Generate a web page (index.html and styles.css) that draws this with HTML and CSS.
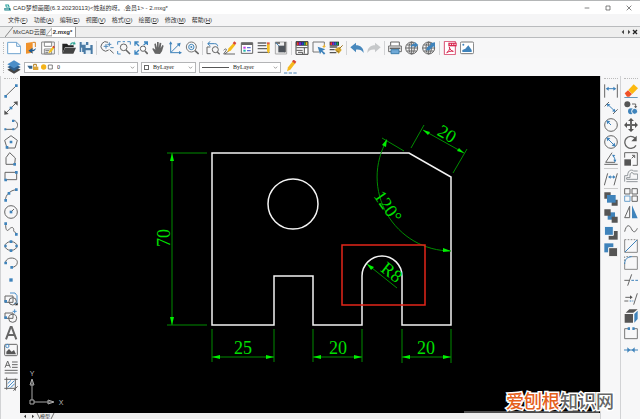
FILE: index.html
```html
<!DOCTYPE html>
<html lang="zh-CN">
<head>
    <meta charset="UTF-8">
    <meta name="viewport" content="width=device-width, initial-scale=1.0">
    <title>CAD梦想画图</title>
    <link rel="stylesheet" href="styles.css">
</head>
<body>

<header class="titlebar">
    <svg class="logo" viewBox="0 0 18 18"><path d="M3 1h9l3 8H5z" fill="#1c9a96"/><path d="M6 3h4l2 5H7z" fill="#bfe8e4"/><path d="M1 10h15l2 7H1z" fill="#147f86"/><path d="M3 13h10" stroke="#fff" stroke-width="2"/></svg>
    <h1>CAD梦想画图(6.3.20230113)&lt;姓赵的呀。,会员1&gt; - 2.mxg*</h1>
    <div class="window-buttons">
        <button aria-label="最小化"><svg viewBox="0 0 18 18"><path d="M2 9h14"/></svg></button>
        <button aria-label="最大化"><svg viewBox="0 0 18 18"><path d="M3 3h12v12H3z"/></svg></button>
        <button aria-label="关闭"><svg viewBox="0 0 18 18"><path d="M2 2l14 14M16 2L2 16"/></svg></button>
    </div>
</header>

<nav class="menu">
    <button>文件(<u>F</u>)</button>
    <button>功能(<u>A</u>)</button>
    <button>编辑(<u>E</u>)</button>
    <button>视图(<u>V</u>)</button>
    <button>格式(<u>O</u>)</button>
    <button>绘图(<u>D</u>)</button>
    <button>修改(<u>M</u>)</button>
    <button>帮助(<u>H</u>)</button>
</nav>

<div class="tabs">
    <svg class="slant" viewBox="0 0 8 10"><path d="M0 10L8 0"/></svg>
    <button class="tab">MxCAD云图</button>
    <svg class="slant active" viewBox="0 0 8 10"><path d="M0 10L8 0V10z"/></svg>
    <button class="tab active">2.mxg*</button>
    <div class="tab-nav">
        <button aria-label="上一个"><svg viewBox="0 0 18 18"><path d="M12 2v14L5 9z"/></svg></button>
        <button aria-label="下一个"><svg viewBox="0 0 18 18"><path d="M6 2v14l7-7z"/></svg></button>
        <button aria-label="关闭标签"><svg viewBox="0 0 18 18"><path d="M3 3l12 12M15 3L3 15" stroke="#222" stroke-width="4"/></svg></button>
    </div>
</div>

<div class="toolbar">
    <button aria-label="新建"><svg viewBox="0 0 42 42"><path d="M2 4h27l12 12v22H2z" fill="#fff" stroke="#6fa3cf"/><path d="M29 4v12h12" stroke="#6fa3cf"/></svg></button>
    <button aria-label="打开"><svg viewBox="0 0 42 42"><path d="M6 6l20-3v32L6 38z" fill="#f0922b"/><path d="M26 4h8v14" stroke="#d9801f"/><path d="M36 20c-1 8-6 11-12 11l3 7-14-9 13-9-1 6c5 0 8-2 11-6z" fill="#1e5c94"/></svg></button>
    <button aria-label="保存"><svg viewBox="0 0 42 42"><path d="M2 3h38v36H2z" fill="#fff" stroke="#888"/><path d="M10 3h22v13H10zM10 24h22v15H10z" stroke="#888"/><path d="M13 29h12M13 34h9" stroke="#777"/><path d="M22 37l3-8 10-12 5 4-10 13z" fill="#f5c31c"/><path d="M34 18l3-4 5 4-3 4z" fill="#d83b2b"/></svg></button>
    <span class="sep"></span>
    <button aria-label="打开文件夹"><svg viewBox="0 0 42 42"><path d="M1 38V8h14l4 5h16v6H9z" fill="#222"/><path d="M9 20h33l-8 18H1z" fill="#444"/><path d="M24 11c2-7 8-8 13-6l1-4 3 9-9 1 2-3c-3-1-5 0-6 3z" fill="#2fa594"/></svg></button>
    <button aria-label="另存为"><svg viewBox="0 0 42 42"><path d="M2 3h26v30H2zM14 12h27v27H14z" fill="#4a7ba5"/><path d="M8 3h13v8H8zM20 12h14v9H20zM20 28h15v11H20z" fill="#e5f1fa"/><path d="M24 31v6M8 20v13" stroke="#e5f1fa"/></svg></button>
    <span class="sep"></span>
    <button aria-label="缩放"><svg viewBox="0 0 42 42"><path d="M24 4A14 14 0 1 0 26 27M29 26l12 11"/><path d="M11 16h14M18 9v14M28 4v12M22 10h12M31 20h10" stroke="#4d86b7"/></svg></button>
    <button aria-label="窗口缩放"><svg viewBox="0 0 42 42"><circle cx="20" cy="19" r="10"/><path d="M27 27l12 12" stroke-width="5"/><path d="M2 11V2h9M31 2h9v9M2 30v9h9M17 2h7" stroke="#4b8dc3"/></svg></button>
    <button aria-label="全部缩放"><svg viewBox="0 0 42 42"><path d="M3 14V3h11M3 3l12 12M30 3h10v9M40 3L29 12M3 28v11h11M3 39l12-12" stroke="#3e86c0" stroke-width="4"/><circle cx="27" cy="23" r="8" fill="#fff" stroke="#666"/><path d="M33 30l8 9" stroke-width="5"/></svg></button>
    <button aria-label="平移"><svg viewBox="0 0 42 42"><path d="M12 38L4 24l2-3 7 5L10 9l4-2 4 13V3h5v17L26 5l5 1-2 16 5-10 4 2-5 17-6 8z" fill="#666"/></svg></button>
    <button aria-label="坐标系"><svg viewBox="0 0 42 42"><path d="M8 5v30h31M8 35L34 9" stroke="#3f83bb"/><path d="M3 10l5-9 5 9zM33 30l9 5-9 5zM26 8l12-3-3 12z" fill="#3f83bb"/></svg></button>
    <button aria-label="实时缩放"><svg viewBox="0 0 42 42"><circle cx="19" cy="18" r="15" stroke="#777"/><circle cx="19" cy="18" r="8" stroke="#4388bd"/><circle cx="19" cy="18" r="3" fill="#4388bd"/><path d="M30 29l11 10" stroke-width="5"/></svg></button>
    <span class="sep"></span>
    <button aria-label="上一视图"><svg viewBox="0 0 42 42"><circle cx="28" cy="26" r="9"/><path d="M34 33l7 7" stroke-width="4"/><path d="M13 18H3v20h11"/><path d="M6 8h20c6 0 9 3 9 8M13 1L5 8l8 7" stroke="#3f83bb"/></svg></button>
    <button aria-label="编辑线"><svg viewBox="0 0 42 42"><path d="M2 28c5-7 11-4 7 1L2 39h34M6 39L21 26"/><path d="M13 33l4-11L31 7l6 5-14 17z" fill="#f6bd19"/><path d="M29 7l5-6 6 5-4 6z" fill="#d84535"/></svg></button>
    <button aria-label="图层特性"><svg viewBox="0 0 42 42"><path d="M4 5h34v32H4z" fill="#fff" stroke="#666"/><path d="M4 9h34" stroke="#666" stroke-width="6"/><path d="M10 20h7" stroke="#c936e5" stroke-width="6"/><path d="M21 20h11M21 29h11" stroke="#5d70d6" stroke-width="4"/><path d="M10 29h7" stroke="#1cb7aa" stroke-width="6"/></svg></button>
    <button aria-label="线型"><svg viewBox="0 0 42 42"><path d="M2 6h26M2 14h26M2 23h28M2 34h36" stroke-width="4"/><path d="M30 8h8v22l-4 8-4-8z" fill="#f5bf22"/><path d="M30 4h8v6h-8z" fill="#e15b42"/></svg></button>
    <button aria-label="图块"><svg viewBox="0 0 42 42"><path d="M4 3h34v36H4z" fill="#eee" stroke="#aaa"/><path d="M4 6h14M33 3v31" stroke="#555" stroke-width="5"/><path d="M13 14h20v20H13z" fill="#4e545b"/><path d="M5 5l10 10" stroke="#4d89ba"/></svg></button>
    <span class="sep"></span>
    <button aria-label="颜色"><svg viewBox="0 0 42 42"><path d="M3 2h36v38H3z" fill="#fff" stroke="#444"/><path d="M4 2h34v12H4z" fill="#222"/><path d="M6 8h5" stroke="#e33" stroke-width="9"/><path d="M12 8h7" stroke="#72c" stroke-width="9"/><path d="M20 8h6" stroke="#24c" stroke-width="9"/><path d="M27 8h4" stroke="#2a5" stroke-width="9"/><path d="M32 8h5" stroke="#e8b718" stroke-width="9"/><path d="M4 20h34M4 28h19M28 20v18M9 34h14v5" stroke="#555"/></svg></button>
    <button aria-label="快速选择"><svg viewBox="0 0 42 42"><path d="M22 33H3V3h34v12" stroke="#777"/><path d="M17 17l23 8-9 4 9 8-4 4-8-9-4 8z" fill="#3e82ba"/><path d="M37 8l2 6 3 2-4 2-2 5-2-5-4-2 5-2z" fill="#efb52e"/></svg></button>
    <button aria-label="特性匹配"><svg viewBox="0 0 42 42"><path d="M2 2h28v12H2z" fill="#222"/><path d="M4 8h5" stroke="#e33" stroke-width="8"/><path d="M10 8h5" stroke="#82c" stroke-width="8"/><path d="M16 8h6" stroke="#26d" stroke-width="8"/><path d="M23 8h5" stroke="#2a5" stroke-width="8"/><path d="M2 18h23M2 26h15M2 35h20" stroke="#555" stroke-width="4"/><path d="M17 25l14-8 7 10-9 11z" fill="#d7a72a"/><path d="M31 23l10-10M20 29l10 4" stroke="#9c741e"/></svg></button>
    <span class="sep"></span>
    <button aria-label="撤销"><svg viewBox="0 0 42 42"><path d="M1 19L18 5v8c13 0 23 8 23 23-5-8-12-11-23-10v8z" fill="#4888bd"/></svg></button>
    <button aria-label="重做"><svg viewBox="0 0 42 42"><path d="M41 19L24 5v8C11 13 1 21 1 36c5-8 12-11 23-10v8z" fill="#c6c8ca"/></svg></button>
    <span class="sep"></span>
    <button aria-label="打印"><svg viewBox="0 0 42 42"><path d="M8 14V3h26v11M2 15h38v17H2z" fill="#fff" stroke="#666"/><path d="M5 22h32" stroke="#666" stroke-width="5"/><path d="M9 26h24v12H9z" fill="#70a9d7" stroke="#3e7fae"/></svg></button>
    <button aria-label="网络"><svg viewBox="0 0 42 42"><circle cx="20" cy="21" r="18"/><ellipse cx="20" cy="21" rx="8" ry="18"/><path d="M2 21h36M5 12h30M5 30h30M20 3v36"/><path d="M17 20c0-8 5-12 12-12V2l11 10-11 9v-6c-5 0-8 1-12 5z" fill="#3f83bb"/></svg></button>
    <button aria-label="网络上传"><svg viewBox="0 0 42 42"><circle cx="20" cy="21" r="18"/><ellipse cx="20" cy="21" rx="8" ry="18"/><path d="M2 21h36M5 12h30M5 30h30M20 3v36"/><path d="M39 4v16l-5-4-12 12H12l4-10 12-8-4-3z" fill="#3f83bb"/></svg></button>
    <span class="sep"></span>
    <button aria-label="PDF"><svg viewBox="0 0 42 42"><path d="M4 1h33v40H4z" fill="#fff" stroke="#d84c70"/><path d="M16 5h25v11H16z" fill="#d72850"/><path d="M20 10h4M27 10h4M34 10h4" stroke="#fff"/><path d="M11 35c7-4 10-11 8-17 2 8 6 12 12 13-8-1-13 0-20 4z" stroke="#d72850"/></svg></button>
    <button aria-label="图片"><svg viewBox="0 0 42 42"><rect x="1" y="3" width="40" height="35" rx="4" fill="#fff" stroke="#777"/><path d="M7 33V27l9-4 9-10 10 14v6z" fill="#3f83bb"/><circle cx="10" cy="11" r="3" fill="#3f83bb"/></svg></button>
</div>

<div class="properties">
    <button aria-label="图层"><svg viewBox="0 0 42 42"><path d="M1 29l20-10 20 10-20 12z" fill="#444"/><path d="M1 21l20-10 20 10-20 12z" fill="#2d5f8e"/><path d="M1 13L21 1l20 12-20 12z" fill="#4b8ec8"/></svg></button>
    <label class="combo layer">
        <svg class="layer-state" viewBox="0 0 78 24"><path d="M1 8h15v9H7z" fill="#35658e"/><path d="M18 11h16v10H18z" fill="#dca437"/><path d="M20 11V4h8v7" stroke="#b07a16" fill="none" stroke-width="3"/><circle cx="50" cy="12" r="8" fill="#f4b31a"/><path d="M64 6h12v12H64z" fill="#fff" stroke="#444" stroke-width="2"/></svg>
        <select aria-label="当前图层"><option>0</option></select>
        <svg class="arrow" viewBox="0 0 18 18"><path d="M3 6l6 6 6-6"/></svg>
    </label>
    <label class="combo color">
        <span class="swatch"></span>
        <select aria-label="颜色"><option>ByLayer</option></select>
        <svg class="arrow" viewBox="0 0 18 18"><path d="M3 6l6 6 6-6"/></svg>
    </label>
    <label class="combo linetype">
        <span class="line"></span>
        <select aria-label="线型"><option>ByLayer</option></select>
        <svg class="arrow" viewBox="0 0 18 18"><path d="M3 6l6 6 6-6"/></svg>
    </label>
    <button aria-label="画笔"><svg viewBox="0 0 42 42"><path d="M9 34l3-12L26 4l8 6-15 19z" fill="#f6b91f"/><path d="M24 4l5-5 8 6-4 6z" fill="#d84535"/><path d="M0 39h42" stroke="#4b83b6" stroke-dasharray="10 4"/></svg></button>
</div>

<main class="workspace">
    <aside class="sidebar left">
        <div class="group">
            <button aria-label="直线"><svg viewBox="0 0 42 42"><path d="M4 37L38 4"/><path class="dot" d="M1 33h8v8H1zM33 1h8v8h-8z"/></svg></button>
            <button aria-label="构造线"><svg viewBox="0 0 42 42"><path d="M5 37L37 5"/><path d="M1 41V28l13 11zM41 1v13L28 3z" fill="#555"/><path class="dot" d="M17 17h8v8h-8z"/></svg></button>
            <button aria-label="多段线"><svg viewBox="0 0 42 42"><path d="M4 34h24c17 0 17-26-1-27"/><path class="dot" d="M1 31h6v6H1zM25 31h6v6h-6zM24 5h7v7h-7z"/></svg></button>
            <button aria-label="正多边形"><svg viewBox="0 0 42 42"><path d="M21 2l19 14-7 23H9L2 16z"/><path class="dot" d="M17 17h8v8h-8zM5 33h8v8H5z"/></svg></button>
            <button aria-label="多边形"><svg viewBox="0 0 42 42"><path d="M17 2l17 16-2 19H6V17z"/><path class="dot" d="M28 33h8v8h-8z"/></svg></button>
            <button aria-label="矩形"><svg viewBox="0 0 42 42"><path d="M3 10h35v22H3z"/><path class="dot" d="M33 6h8v8h-8zM1 29h8v8H1z"/></svg></button>
        </div>
        <div class="group">
            <button aria-label="圆弧"><svg viewBox="0 0 42 42"><path d="M4 37C5 20 18 7 37 5"/><path class="dot" d="M1 33h8v8H1zM33 1h8v8h-8zM11 12h8v8h-8z"/></svg></button>
            <button aria-label="圆"><svg viewBox="0 0 42 42"><circle cx="21" cy="21" r="19"/><path d="M21 21l9-9"/><path class="dot" d="M17 17h8v8h-8z"/></svg></button>
            <button aria-label="样条"><svg viewBox="0 0 42 42"><path d="M5 7c0 20 5 22 11 14 9-9 14-3 13 4s7 2 8 12"/><path class="dot" d="M1 1h8v8H1zM33 33h8v8h-8z"/></svg></button>
            <button aria-label="椭圆"><svg viewBox="0 0 42 42"><ellipse cx="21" cy="21" rx="18" ry="13"/><path class="dot" d="M1 17h7v8H1zM34 17h7v8h-7zM17 4h8v8h-8zM17 31h8v8h-8z"/></svg></button>
            <button aria-label="椭圆弧"><svg viewBox="0 0 42 42"><path d="M4 21C5 1 40 2 40 19c0 9-8 15-17 15"/><path class="dot" d="M1 17h8v8H1zM19 30h8v8h-8z"/></svg></button>
            <button aria-label="点"><svg viewBox="0 0 42 42"><path class="dot" d="M16 16h10v10H16z"/></svg></button>
        </div>
        <div class="group">
            <button aria-label="插入块"><svg viewBox="0 0 42 42"><path d="M18 3h15l6 8v23h-9" stroke="#4a8fca"/><path d="M3 12h24v19H3z"/><circle cx="26" cy="28" r="11"/><path class="dot" d="M1 24h8v8H1z"/><path d="M32 40h9v-8z" fill="#222"/></svg></button>
            <button aria-label="创建块"><svg viewBox="0 0 42 42"><path d="M3 12h24v16H3z"/><circle cx="26" cy="28" r="12"/><path class="dot" d="M1 22h8v8H1z"/><path d="M32 1v12M26 7h12" stroke="#4a8fca"/></svg></button>
            <button aria-label="文字"><svg viewBox="0 0 42 42"><path d="M6 40L20 3h3l14 37M12 27h19" stroke-width="6"/></svg></button>
            <button aria-label="图像"><svg viewBox="0 0 42 42"><rect x="2" y="4" width="38" height="34" rx="3"/><path d="M7 34v-8l8-8 8 8 7-5 6 13z" fill="#555"/><circle cx="10" cy="9" r="5" stroke="#4a8fca"/></svg></button>
            <button aria-label="多行文字"><svg viewBox="0 0 42 42"><path d="M3 23L11 3l8 20M6 16h11M24 6h17M24 14h17M24 22h17M2 31h39M2 39h39"/></svg></button>
            <button aria-label="填充"><svg viewBox="0 0 42 42"><path d="M8 1v37M34 5v36M1 7h40M1 34h34M28 41l13-13"/><path d="M11 20l10-10M11 31l20-20M20 32l12-12" stroke="#4a8fca"/></svg></button>
        </div>
    </aside>

    <section class="drawing">
        <svg class="model" viewBox="20 76 580 337" preserveAspectRatio="xMinYMin meet">
            <!-- part outline -->
            <path class="part" d="M212 153H409L451 177V325H402V276A20 20 0 0 0 362 276V325H313V276H274V325H212z"/>
            <circle class="part" cx="293" cy="204" r="25"/>

            <!-- dimensions -->
            <path class="dim" d="M167 153H207M167 325H207M172 153V325"/>
            <path class="dim" d="M212 329V362M274 329V362M212 357H274"/>
            <path class="dim" d="M313 329V362M362 329V362M313 357H362"/>
            <path class="dim" d="M402 329V363M451 329V363M402 357H451"/>
            <path class="dim" d="M424 125L411 148M467 149L453 173M423 130L464 153"/>
            <path class="dim" d="M382 138L404 151M387 140A74 74 0 0 0 451 251M367 264L397 288"/>
            <path class="tip" d="M172 153l2 8h-4zM172 325l2-8h-4zM212 357l8-2v4zM274 357l-8-2v4zM313 357l8-2v4zM362 357l-8-2v4zM402 357l8-2v4zM451 357l-8-2v4zM451 251l-8-3v4zM387 139l-1 8-4-2zM423 130l7 2-2 3zM464 153l-5-5-2 3zM367 264l7 3-3 3z"/>
            <text transform="translate(170 238) rotate(-90)">70</text>
            <text x="243" y="354">25</text>
            <text x="338" y="354">20</text>
            <text x="426" y="354">20</text>
            <text transform="translate(444 139) rotate(30)">20</text>
            <text transform="translate(383 210) rotate(55)">120°</text>
            <text transform="translate(388 277) rotate(38)">R8</text>

            <path class="mark" d="M342 245H425V305H342z"/>

            <!-- UCS icon -->
            <path class="ucs" d="M30 400h4v4h-4zM32 400V380M34 402H53M30 385l2-6 2 6zM48 400l6 2-6 2z"/>
            <text class="axis" x="32" y="376">Y</text>
            <text class="axis" x="61" y="405">X</text>
            <path class="edge" d="M464 412H599"/>
        </svg>
        <div class="sheets">
            <svg viewBox="0 0 54 18"><path d="M12 5v11L6 10zM30 5v11l6-6z" fill="#333"/><path d="M45 0l9 18" stroke="#333" stroke-width="2"/></svg>
            <button>模型</button>
            <svg class="sheet-end" viewBox="0 0 18 18"><path d="M12 0L3 18" stroke="#333" stroke-width="2"/></svg>
        </div>
    </section>

    <aside class="sidebar dims">
        <div class="group">
            <button aria-label="线性标注"><svg viewBox="0 0 42 42"><path d="M2 1v40M40 1v40"/><path d="M10 14h22" stroke="#3f83bb"/><path class="dot" d="M5 14l9-6v12zM37 14l-9-6v12z"/></svg></button>
            <button aria-label="对齐标注"><svg viewBox="0 0 42 42"><path d="M2 16L15 3M27 39l14-14"/><path d="M12 11l20 19" stroke="#3f83bb"/><path class="dot" d="M8 8l11 2-8 8zM35 33l-11-2 8-8z"/></svg></button>
            <button aria-label="半径标注"><svg viewBox="0 0 42 42"><circle cx="21" cy="21" r="19"/><path d="M21 21L12 12" stroke="#3f83bb"/><path class="dot" d="M7 7l12 3-9 9z"/></svg></button>
            <button aria-label="直径标注"><svg viewBox="0 0 42 42"><circle cx="21" cy="21" r="19"/><path d="M12 12l18 18" stroke="#3f83bb"/><path class="dot" d="M7 7l12 3-9 9zM35 35l-12-3 9-9z"/></svg></button>
            <button aria-label="角度标注"><svg viewBox="0 0 42 42"><path d="M24 2L5 31h28M1 37h40"/><path d="M28 12q5 6 5 14" stroke="#3f83bb"/><path class="dot" d="M24 8l10 1-6 7zM28 23h9l-4 9z"/></svg></button>
        </div>
        <hr>
        <button aria-label="倾斜标注"><svg viewBox="0 0 42 42"><path d="M11 4L1 40M40 4L30 40"/><path d="M15 15h14" stroke="#3f83bb"/><path class="dot" d="M12 15l8-5v10zM35 15l-8-5v10z"/></svg></button>
        <hr>
        <div class="group">
            <button aria-label="前置"><svg viewBox="0 0 42 42"><path d="M1 1h19v19H1zM23 23h18v18H23z" fill="#555"/><path class="blue" d="M9 9h26v23H9z"/></svg></button>
            <button aria-label="后置"><svg viewBox="0 0 42 42"><path class="blue" d="M11 10h22v22H11z"/><path d="M1 1h19v19H1zM23 23h18v18H23z" fill="#555"/></svg></button>
            <button aria-label="置于对象之上"><svg viewBox="0 0 42 42"><path d="M14 15h27v26H14z" fill="#555"/><path class="blue" d="M1 1h27v27H1z" stroke="#fff"/></svg></button>
            <button aria-label="置于对象之下"><svg viewBox="0 0 42 42"><path class="blue" d="M1 1h27v27H1z"/><path d="M14 14h27v27H14z" fill="#555" stroke="#fff"/></svg></button>
        </div>
    </aside>

    <aside class="sidebar modify">
        <div class="group">
            <button aria-label="删除"><svg viewBox="0 0 42 42"><path d="M13 18L29 1l13 12-17 17z" fill="#fcb90f"/><path d="M2 28l10-9 12 11-8 8H9z" fill="#f05127"/><path d="M1 41h40" stroke="#4b85af"/></svg></button>
            <button aria-label="复制"><svg viewBox="0 0 42 42"><circle cx="10" cy="10" r="9" fill="#555"/><circle class="blue" cx="21" cy="31" r="9"/><circle class="blue" cx="32" cy="31" r="9" stroke="#fff"/><path d="M24 9h11v9"/><path d="M30 16h10l-5 6z" fill="#555"/></svg></button>
            <button aria-label="移动"><svg viewBox="0 0 42 42"><path d="M21 5v32M5 21h32" stroke-width="6"/><path d="M12 9l9-9 9 9zM12 33l9 9 9-9zM9 12l-9 9 9 9zM33 12l9 9-9 9z" fill="#555"/></svg></button>
            <button aria-label="旋转"><svg viewBox="0 0 42 42"><path d="M36 31a18 18 0 1 1-3-22" stroke-width="4"/><path d="M38 2v17H22z" fill="#555"/></svg></button>
            <button aria-label="缩放对象"><svg viewBox="0 0 42 42"><path d="M2 17V2h38v38H26"/><path d="M1 22h20v19H1z" fill="#555"/><path d="M23 19l8-8M24 10h8v8"/></svg></button>
            <button aria-label="偏移"><svg viewBox="0 0 42 42"><path d="M2 38V20h9c0-20 16-18 17-14h13M7 38h34M8 31h33V15H28c0-6-10-6-10 3v8H8z" stroke="#909599"/></svg></button>
        </div>
        <div class="group">
            <button aria-label="阵列"><svg viewBox="0 0 42 42"><path d="M2 2h16v16H2zM24 2h16v16H24zM24 24h16v16H24z"/><path d="M2 24h16v16H2z" stroke="#6ca0cb"/></svg></button>
            <button aria-label="镜像"><svg viewBox="0 0 42 42"><path d="M17 4v34H2z"/><path class="blue" d="M24 1v39h17z"/></svg></button>
            <button aria-label="样条编辑"><svg viewBox="0 0 42 42"><path d="M2 29c5-22 14-22 20-9s12 12 18-1"/></svg></button>
            <button aria-label="倒角"><svg viewBox="0 0 42 42"><path d="M2 40h38V2M2 2v38" stroke="#888"/><path d="M2 2h38" stroke="#888" stroke-dasharray="5 4"/><path d="M3 39L39 3" stroke="#3f83bb"/></svg></button>
            <button aria-label="圆角"><svg viewBox="0 0 42 42"><path d="M2 24v16h38V2H24" stroke="#888"/><path d="M2 24V2h22" stroke="#888" stroke-dasharray="5 4"/><path d="M2 24C2 10 10 2 24 2" stroke="#3f83bb"/></svg></button>
            <button aria-label="修剪"><svg viewBox="0 0 42 42"><path d="M23 4L11 38M1 22h14"/><path d="M22 22h20" stroke="#3f83bb" stroke-dasharray="8 4"/></svg></button>
        </div>
        <div class="group">
            <button aria-label="延伸"><svg viewBox="0 0 42 42"><path d="M40 4L29 38M4 16h16M1 27h12"/><path d="M18 10l8 6-8 6z" fill="#555"/><path d="M17 27h11" stroke="#3f83bb" stroke-dasharray="5 3"/></svg></button>
            <button aria-label="分解"><svg viewBox="0 0 42 42"><path d="M2 15h25v26H2zM5 11L16 1h25L28 11z" fill="#555"/><path class="blue" d="M31 15L41 5v25L31 41z"/></svg></button>
            <button aria-label="打断"><svg viewBox="0 0 42 42"><path d="M12 8H2v30h38V8H30" stroke="#777"/><path class="dot" d="M11 4h7v8h-7zM25 4h7v8h-7z"/></svg></button>
            <button aria-label="合并"><svg viewBox="0 0 42 42"><path d="M0 21h42" stroke="#3f83bb"/><path class="dot" d="M10 13l9 8-9 8zM32 13l-9 8 9 8z"/></svg></button>
        </div>
    </aside>
</main>

<div class="watermark"><span>爱刨根</span>知识网</div>

</body>
</html>
```
FILE: styles.css
```css
* {
    box-sizing: border-box;
}

body {
    margin: 0;
    height: 100vh;
    display: flex;
    flex-direction: column;
    overflow: hidden;
    background: #f5f5f6;
    border-top: 1px solid #b4b6b7;
    color: #333;
    font-family: "Liberation Sans", "Noto Sans CJK SC", sans-serif;
    font-size: 6px;
    line-height: 10px;
}

button {
    flex: none;
    margin: 0;
    padding: 0;
    border: 0;
    background: none;
    color: inherit;
    font: inherit;
    white-space: nowrap;
}

svg {
    display: block;
    fill: none;
}

.titlebar {
    display: flex;
    align-items: center;
    height: 13px;
    padding: 0 8px 0 4px;
    background: #fff;
}

.logo {
    width: 7px;
    height: 7px;
    margin-right: 2px;
}

h1 {
    margin: 0;
    font-size: 6px;
    font-weight: normal;
}

.window-buttons {
    display: flex;
    gap: 15px;
    margin-left: auto;
}

.window-buttons svg,
.tab-nav svg {
    width: 6px;
    height: 6px;
    stroke: #444;
    stroke-width: 2;
}

.menu {
    display: flex;
    align-items: center;
    gap: 6px;
    height: 12px;
    padding-left: 8px;
    background: #f5f5f6;
}

.tabs {
    display: flex;
    align-items: flex-end;
    height: 12px;
    padding-left: 5px;
    background: #eee;
    border-top: 1px solid #b9bbbd;
    border-bottom: 1px solid #b9bbbd;
}

.slant {
    width: 8px;
    height: 10px;
    stroke: #888;
}

.slant.active {
    width: 6px;
    fill: #fff;
}

.tab.active {
    padding: 0 3px 0 1px;
    background: #fff;
    border-right: 1px solid #999;
    font-weight: bold;
}

.tab-nav {
    display: flex;
    align-self: center;
    margin-left: auto;
    padding-right: 2px;
}

.tab-nav svg {
    fill: #444;
    stroke: none;
}

.toolbar {
    display: flex;
    align-items: center;
    gap: 3px;
    height: 20px;
    padding-left: 3px;
    background: #f7f7f8;
}

/* drag grips */
.toolbar::before,
.properties::before {
    content: "";
    height: 12px;
    border-left: 1px dotted #bbb;
}

.sidebar::before {
    content: "";
    width: 14px;
    border-top: 1px dotted #bbb;
}

.toolbar svg,
.sidebar svg,
.properties button svg {
    width: 14px;
    height: 14px;
    stroke-width: 3;
}

.toolbar svg,
.sidebar svg {
    stroke: #666;
}

.toolbar path[fill]:not([stroke]),
.sidebar path[fill]:not([stroke]),
.toolbar circle[fill]:not([stroke]),
.sidebar circle[fill]:not([stroke]) {
    stroke: none;
}

.sep {
    width: 1px;
    height: 14px;
    background: #d2d3d5;
}

.properties {
    display: flex;
    align-items: center;
    gap: 3px;
    height: 18px;
    padding-left: 3px;
    background: #f8f8f9;
}

.combo {
    display: flex;
    align-items: center;
    gap: 4px;
    height: 11px;
    padding: 0 2px;
    background: #fff;
    border: 1px solid #b3b4b6;
}

.combo select {
    flex: 1;
    min-width: 0;
    padding: 0;
    border: 0;
    background: none;
    color: #222;
    appearance: none;
    font-family: "Liberation Serif", serif;
    font-size: 6px;
    line-height: 8px;
}

.layer {
    width: 114px;
}

.color {
    width: 55px;
}

.linetype {
    width: 82px;
}

.layer-state {
    width: 26px;
    height: 8px;
}

.swatch {
    width: 5px;
    height: 5px;
    border: 1px solid #666;
}

.linetype .line {
    width: 27px;
    height: 1px;
    background: #555;
}

.arrow {
    width: 5px;
    height: 5px;
    stroke: #555;
    stroke-width: 2;
}

.workspace {
    display: flex;
    flex: 1;
    min-height: 0;
}

.sidebar {
    flex: none;
    width: 20px;
    display: flex;
    flex-direction: column;
    align-items: center;
    gap: 5px;
    padding-top: 2px;
    background: #f7f7f8;
    border-left: 1px solid #d2d3d5;
}

.group {
    display: flex;
    flex-direction: column;
    gap: 3px;
}

.sidebar .dot,
.sidebar .blue {
    fill: #3f83bb;
}

.sidebar .dot,
.sidebar .blue:not([stroke]) {
    stroke: none;
}

.sidebar hr {
    width: 14px;
    margin: -3px 0 -2px;
    border: 0;
    border-top: 1px solid #ccc;
}

.drawing {
    flex: 1;
    min-width: 0;
    display: flex;
    flex-direction: column;
    background: #000;
}

.model {
    flex: 1;
    width: 100%;
    min-height: 0;
}

.part {
    stroke: #f4f4f4;
    stroke-width: 1.5;
}

.dim {
    stroke: #008c00;
}

.tip {
    fill: #00f000;
}

.model text {
    fill: #00e000;
    font-family: "Liberation Serif", serif;
    font-size: 18px;
    text-anchor: middle;
}

.mark {
    stroke: #e3261a;
    stroke-width: 1.5;
}

.ucs {
    stroke: #aaa;
}

.model .axis {
    fill: #bbb;
    font-family: "Liberation Sans", sans-serif;
    font-size: 7px;
}

.edge {
    stroke: #999;
}

.sheets {
    display: flex;
    flex: none;
    height: 6px;
    padding-left: 2px;
    background: #eee;
    font-size: 5px;
    line-height: 6px;
}

.sheets svg {
    width: 18px;
    height: 6px;
}

.sheets .sheet-end {
    width: 6px;
}

/* overlay in the bottom right corner */
.watermark {
    position: absolute;
    right: 26px;
    bottom: 8px;
    color: #666;
    font-family: "Noto Sans CJK SC", sans-serif;
    font-size: 18px;
    font-weight: 500;
    line-height: 22px;
    -webkit-text-stroke: 3px #fff;
    paint-order: stroke fill;
}

.watermark span {
    color: #e5601c;
}
```
